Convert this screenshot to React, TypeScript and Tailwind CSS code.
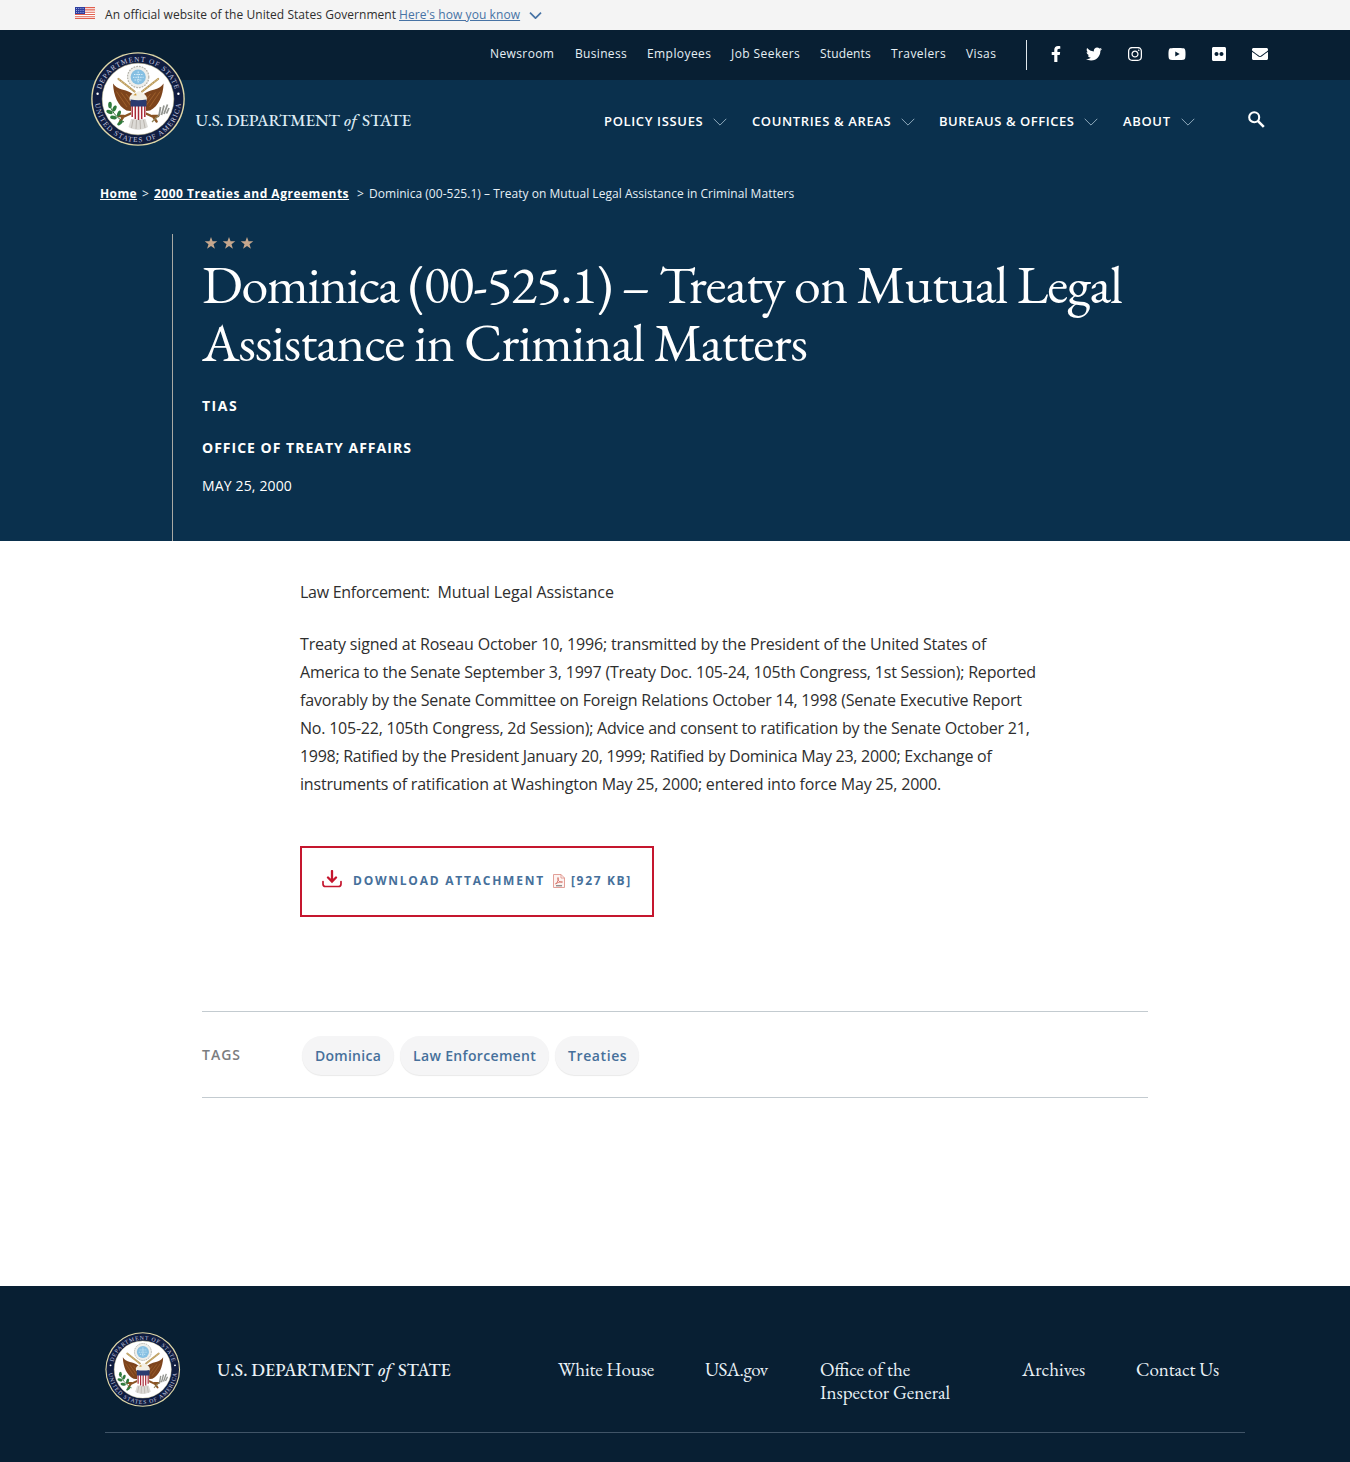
import { FaEnvelope, FaFacebookF, FaFlickr, FaInstagram, FaTwitter, FaYoutube } from 'react-icons/fa';

const serif = "font-['EB_Garamond','Liberation_Serif',serif]";

function Seal({ id, className }: { id: string; className: string }) {
  const wing = (
    <g>
      <path d="M22 31.5 C22.5 44 27 54 35.5 58.5 L44 59.5 L44.5 45 C41.5 40.5 36 38.5 31 37.5 C27 36.500 24 34.500 22 31.5Z" fill="#7d441c" />
      <path d="M25.5 39.5 L36 55 M30 40.5 L39.500 53.500 M35 42 L41.5 50" stroke="#a5662f" strokeWidth=".8" fill="none" />
      <path d="M27.5 27 L43.5 39.500" stroke="#b8985a" strokeWidth="2.2" strokeLinecap="round" />
      <path d="M27.5 27 L43.5 39.500" stroke="#e8d59c" strokeWidth=".7" strokeDasharray="2 1.2" />
      <path d="M43 60 L31 65.500 M33 64 L29 69.500 M33 64 L27.500 64" stroke="#8a5424" strokeWidth="2.4" strokeLinecap="round" fill="none" />
    </g>
  );
  return (
    <svg viewBox="0 0 94 94" className={className} aria-label="Department of State seal">
      <defs>
        <path id={`${id}-top`} d="M8.9 44 A38.3 38.3 0 0 1 85.1 44" />
        <path id={`${id}-bottom`} d="M3.9 47 A43.1 43.1 0 0 0 90.1 47" />
      </defs>
      <circle cx="47" cy="47" r="46.8" fill="#e0d8a8" />
      <circle cx="47" cy="47" r="45.4" fill="#101d40" />
      <circle cx="47" cy="47" r="35.8" fill="#fff" stroke="#e6dda9" strokeWidth=".5" />
      <g fill="#c9cde0" fontFamily="Liberation Serif, serif" fontSize="7.2" textAnchor="middle">
        <text textLength="99"><textPath href={`#${id}-top`} startOffset="50%" textLength="99">DEPARTMENT OF STATE</textPath></text>
        <text textLength="126"><textPath href={`#${id}-bottom`} startOffset="50%" textLength="126">UNITED STATES OF AMERICA</textPath></text>
      </g>
      <circle cx="6.6" cy="41.8" r="1.2" fill="#fff" />
      <circle cx="87.4" cy="41.8" r="1.2" fill="#fff" />
      <circle cx="47.2" cy="25" r="10.6" fill="#eeeeea" stroke="#b4b3aa" strokeWidth="1.2" strokeDasharray="1.8 1" />
      <circle cx="47.2" cy="25" r="7.6" fill="#85bfe2" />
      <path d="M43 22.5h8.5 M42 25.3h10.5 M43.5 28h7.5 M47.2 19.5v11" stroke="#d9effa" strokeWidth="1" strokeDasharray="1.4 1" />
      {wing}
      <g transform="matrix(-1 0 0 1 94.6 0)">{wing}</g>
      <path d="M40 67 L54.5 67 L57 75 C51 78.5 43 78.5 37.5 75Z" fill="#dcdad6" />
      <path d="M42 68l-1.5 8 M45.5 68l-.5 9 M49 68l.5 9 M52.5 68l1.5 8" stroke="#aaa59e" strokeWidth=".7" />
      <path d="M39 49 C37 44 41 41 45 41 C46.500 38.6 49.8 38.8 50.6 41 C54.500 42 57 45 55.500 49Z" fill="#f3efe4" />
      <path d="M45 41.2 L42.3 43.2 L45.5 43.6Z" fill="#cf9a35" />
      <path d="M40 53h15v9.5c0 3-3.500 4.6-7.500 5.4C43.500 67.100 40 65.500 40 62.500Z" fill="#fff" />
      <path d="M41.200 53v12 M44.300 53v14 M47.500 53v15 M50.700 53v14 M53.800 53v12" stroke="#a92a38" strokeWidth="1.5" />
      <path d="M39.500 47.500 C45 48.500 50 48.500 55.500 47.500 V54.500 H39.500Z" fill="#2b3b70" />
      <path d="M33 70 C28 67 22 62 19 54" stroke="#39703a" strokeWidth="1" fill="none" />
      <g fill="#2f7a3c">
        <ellipse cx="19" cy="53" rx="1.8" ry="3.300" />
        <ellipse cx="23.500" cy="56.500" rx="1.800" ry="3.200" transform="rotate(25 23.500 56.500)" />
        <ellipse cx="18.500" cy="60" rx="1.800" ry="3.300" transform="rotate(-70 18.500 60)" />
        <ellipse cx="28" cy="61.500" rx="1.700" ry="3.200" transform="rotate(20 28 61.500)" />
        <ellipse cx="22.500" cy="65.500" rx="1.800" ry="3.400" transform="rotate(-80 22.500 65.500)" />
        <ellipse cx="29" cy="71" rx="1.500" ry="3.300" transform="rotate(50 29 71)" />
      </g>
      <path d="M61 70 L69 62" stroke="#8d8359" strokeWidth="1.300" />
      <path d="M68 64 L69.500 55 M70.500 63 L73 53.500 M73 62 L76.500 52.500 M75.500 61.500 L78 56" stroke="#92948f" strokeWidth="1.700" />
    </svg>
  );
}

function Flag() {
  return (
    <svg viewBox="0 0 20 12" className="h-3 w-5 shrink-0">
      <rect width="20" height="12" fill="#fff" />
      <path d="M0 .6h20M0 2.900h20M0 5.200h20M0 7.500h20M0 9.700h20M0 11.600h20" stroke="#e0604f" strokeWidth="1.100" />
      <rect width="10" height="7" fill="#2f3f9f" />
      <path d="M1 1.500h8M1 3.500h8M1 5.500h8" stroke="#b9c3ee" strokeWidth=".8" strokeDasharray="1 1.200" />
    </svg>
  );
}

function Chevron({ className, width }: { className: string; width: number }) {
  return (
    <svg viewBox="0 0 14 8" className={className} fill="none" stroke="currentColor" strokeWidth={width}>
      <path d="M.7.8l6.300 6.300L13.300.8" />
    </svg>
  );
}

const Star = () => (
  <svg viewBox="0 0 24 24" className="size-3.5" fill="#c6a78d">
    <path d="M12 1.500l2.700 7.700h8.100l-6.500 4.900 2.400 7.900L12 17.300 5.300 22l2.400-7.900L1.200 9.200h8.100z" />
  </svg>
);

const topLinks = [
  ['Newsroom', 'w-[85px] tracking-[0.39px]'],
  ['Business', 'w-[72px] tracking-[0.32px]'],
  ['Employees', 'w-[84px] tracking-[0.42px]'],
  ['Job Seekers', 'w-[89px] tracking-[0.42px]'],
  ['Students', 'w-[71px] tracking-[0.15px]'],
  ['Travelers', 'w-[75px] tracking-[0.42px]'],
  ['Visas', 'w-[60px] tracking-[0.4px]'],
];

const mainLinks = [
  ['POLICY ISSUES', 'w-[108.500px] tracking-[0.65px]', 'mr-[25.500px]'],
  ['COUNTRIES & AREAS', 'w-[148.500px] tracking-[0.63px]', 'mr-[24.500px]'],
  ['BUREAUS & OFFICES', 'w-[144.500px] tracking-[0.54px]', 'mr-[25.500px]'],
  ['ABOUT', 'w-[57.500px] tracking-[0.65px]', 'mr-[25px]'],
];

const tags = [
  ['Dominica', 'w-[92px] tracking-[0.26px]'],
  ['Law Enforcement', 'w-[149px] tracking-[0.34px]'],
  ['Treaties', 'w-[84px] tracking-[0.6px]'],
];

const paragraph = [
  ['Treaty signed at Roseau October 10, 1996; transmitted by the President of the United States of', 'tracking-[-0.177px]'],
  ['America to the Senate September 3, 1997 (Treaty Doc. 105-24, 105th Congress, 1st Session); Reported', 'tracking-[-0.198px]'],
  ['favorably by the Senate Committee on Foreign Relations October 14, 1998 (Senate Executive Report', 'tracking-[-0.190px]'],
  ['No. 105-22, 105th Congress, 2d Session); Advice and consent to ratification by the Senate October 21,', 'tracking-[-0.225px]'],
  ['1998; Ratified by the President January 20, 1999; Ratified by Dominica May 23, 2000; Exchange of', 'tracking-[-0.280px]'],
  ['instruments of ratification at Washington May 25, 2000; entered into force May 25, 2000.', 'tracking-[-0.198px]'],
];

export default function App() {
  return (
    <div className="h-[1462px] w-[1350px] overflow-hidden bg-white font-['Open_Sans',sans-serif] whitespace-nowrap">
      <div className="flex h-[30px] bg-[#f4f4f4] pl-[75px] text-xs leading-[29px] text-[#2e2e2e]">
        <div className="mt-[7px] mr-2.5"><Flag /></div>
        <span className="w-[294px] tracking-[0.05px]">An official website of the United States Government</span>
        <a className="tracking-[0.08px] text-[#4773a5] underline">Here's how you know</a>
        <Chevron width={1.900} className="mt-3 ml-[9px] h-[7px] w-[13px] text-[#4773a5]" />
      </div>

      <header className="relative bg-[#0a304d] text-white">
        <div className="flex h-[50px] bg-[#081f33] pl-[490px] text-xs leading-[47px] text-[#e6eff5]">
          {topLinks.map(([t, c]) => <a key={t} className={c}>{t}</a>)}
          <div className="mt-2.5 h-[30px] w-px bg-[#dfe7ec]" />
          <div className="flex h-12 items-center pl-6 text-white">
            <FaFacebookF className="mr-[25px] h-4 w-2.5" />
            <FaTwitter className="mr-[26px] size-4" />
            <FaInstagram className="mr-[26px] h-4 w-3.5" />
            <FaYoutube className="mr-[26px] h-4 w-[18px]" />
            <FaFlickr className="mr-[26px] h-4 w-3.5" />
            <FaEnvelope className="size-4" />
          </div>
        </div>
        <Seal id="header-seal" className="absolute top-[22px] left-[91px] size-[94px]" />

        <div className="flex h-[82px] items-center pl-[195.500px]">
          <div className={`${serif} mb-0.5 flex w-[408.500px] text-[17px] leading-none font-medium text-[#dceaf3]`}>
            <span className="w-[148.500px] tracking-[-0.220px]">U.S. DEPARTMENT</span>
            <em className="w-[18px]">of</em>
            <span className="tracking-[-0.150px]">STATE</span>
          </div>
          {mainLinks.map(([t, c, m]) => (
            <div key={t} className={`flex items-center pt-0.5 text-[13px] font-semibold ${m}`}>
              <a className={c}>{t}</a>
              <Chevron width={1} className="h-2 w-3.5 text-[#8fa9bb]" />
            </div>
          ))}
          <svg viewBox="0 0 17 17" className="mb-[3px] ml-7 size-[17px]" fill="none" stroke="currentColor">
            <circle cx="6.200" cy="6.200" r="5" strokeWidth="2.100" />
            <path d="M9.800 9.800l6 6" strokeWidth="2.600" />
          </svg>
        </div>

        <div className="mt-[23px] flex h-[17px] pl-[100px] text-xs leading-[17px] text-[#e6eff5]">
          <a className="w-[42px] font-bold tracking-[0.4px] text-white"><span className="underline">Home</span></a>
          <span className="w-3">&gt;</span>
          <a className="w-[203px] font-bold tracking-[0.510px] text-white"><span className="underline">2000 Treaties and Agreements</span></a>
          <span className="w-3">&gt;</span>
          <span className="tracking-[0.032px]">Dominica (00-525.1) – Treaty on Mutual Legal Assistance in Criminal Matters</span>
        </div>

        <div className="mt-8 ml-[172px] h-[307px] border-l border-[#a9a9a4] pl-[29px]">
          <div className="flex gap-1 pt-0.5 pl-[1.500px]"><Star /><Star /><Star /></div>
          <h1 className={`${serif} mt-[5px] text-[54px] leading-[58px]`}>
            <span className="block tracking-[-1.110px]"><span className="tracking-[-1.320px]">Dominica (00-525.1) – </span>Treaty on Mutual Legal</span>
            <span className="block tracking-[-0.950px]">Assistance in Criminal Matters</span>
          </h1>
          <p className="mt-[25px] text-sm leading-5 font-bold tracking-[1.500px]">TIAS</p>
          <p className="mt-[22px] text-sm leading-5 font-bold tracking-[1.010px]">OFFICE OF TREATY AFFAIRS</p>
          <p className="mt-[18px] text-sm leading-5 tracking-[0.150px]">MAY 25, 2000</p>
        </div>
      </header>

      <main className="h-[745px] pt-[37px] text-[#2e2e2e]">
        <div className="ml-[300px] text-base leading-7">
          <p className="tracking-[-0.070px]"><span className="tracking-[-0.280px]">Law Enforcement:&nbsp; </span>Mutual Legal Assistance</p>
          <p className="mt-6">{paragraph.map(([l, c]) => <span key={l} className={`block ${c}`}>{l}</span>)}</p>
        </div>
        <a className="mt-[48px] ml-[300px] flex h-[71px] w-[354px] border-2 border-[#c5162e] pl-5 text-xs leading-[66px] font-bold text-[#46709b]">
          <svg viewBox="0 0 20 18" className="mt-[22px] mr-[11px] h-[18px] w-5" fill="none" stroke="#c5162e" strokeWidth="2" strokeLinecap="round">
            <path d="M10 1v10M6 7.500l4 4 4-4" strokeWidth="2.300" />
            <path d="M1 11.500v2.500q0 2.500 2.500 2.500h13q2.500 0 2.500-2.500v-2.500" strokeWidth="1.700" />
          </svg>
          <span className="w-[200px] tracking-[1.760px]">DOWNLOAD ATTACHMENT</span>
          <svg viewBox="0 0 12 14" className="mt-[26px] mr-1.5 h-3.5 w-3" fill="none" stroke="#e0958c" strokeWidth=".9">
            <path d="M.5.5h7.500l3.500 3.500v9.500h-11zM8 .5V4h3.500" fill="#fdf3f1" />
            <path d="M2.500 10C5 8 5.500 5.500 5 3.500C4.500 7 7 8.500 9.500 8C7 7.500 4.500 8.500 2.500 10" stroke="#cf6358" strokeWidth=".8" />
            <path d="M3 11.800h6" stroke="#555" />
          </svg>
          <span className="tracking-[1.650px]">[927 KB]</span>
        </a>
        <div className="mt-[94px] ml-[202px] flex h-[87px] w-[946px] border-y border-[#c3cbd0] text-sm font-semibold">
          <span className="w-[100px] leading-[86px] tracking-[1px] text-[#7b7d80]">TAGS</span>
          <div className="mt-6 flex gap-1.5">
            {tags.map(([t, c]) => (
              <a key={t} className={`${c} h-[39px] rounded-[20px] bg-[#f5f5f6] pl-[13px] leading-10 text-[#46709b] shadow-[0_1px_1px_rgba(0,0,0,0.09)]`}>{t}</a>
            ))}
          </div>
        </div>
      </main>

      <footer className="h-[176px] bg-[#081f33] px-[105px] pt-[46px]">
        <div className={`${serif} flex h-[101px] border-b border-[#405467] text-[19px] leading-[23px] text-[#e9f1f6]`}>
          <Seal id="footer-seal" className="mr-9 h-[75px] w-[75.500px]" />
          <div className="mt-[26px] flex w-[341.500px] pl-[0.500px] text-[18px] font-medium">
            <span className="w-[161px] tracking-[0.020px]">U.S. DEPARTMENT</span>
            <em className="w-5">of</em>
            <span>STATE</span>
          </div>
          <div className="mt-[26px] flex">
            <a className="w-[147px] tracking-[-0.130px]">White House</a>
            <a className="w-[115px] tracking-[-0.500px]">USA.gov</a>
            <a className="w-[202px]">Office of the<br />Inspector General</a>
            <a className="w-[114px]">Archives</a>
            <a className="tracking-[-0.100px]">Contact Us</a>
          </div>
        </div>
      </footer>
    </div>
  );
}
